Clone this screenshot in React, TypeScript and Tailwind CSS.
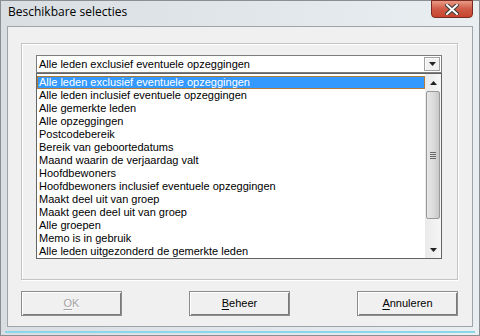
import React from "react";

const items = [
  "Alle leden exclusief eventuele opzeggingen",
  "Alle leden inclusief eventuele opzeggingen",
  "Alle gemerkte leden",
  "Alle opzeggingen",
  "Postcodebereik",
  "Bereik van geboortedatums",
  "Maand waarin de verjaardag valt",
  "Hoofdbewoners",
  "Hoofdbewoners inclusief eventuele opzeggingen",
  "Maakt deel uit van groep",
  "Maakt geen deel uit van groep",
  "Alle groepen",
  "Memo is in gebruik",
  "Alle leden uitgezonderd de gemerkte leden",
];

function Arrow({ up }: { up?: boolean }) {
  return (
    <svg width="7" height="4" viewBox="0 0 7 4">
      {up ? <path d="M0 4 L3.5 0 L7 4 Z" fill="#222" /> : <path d="M0 0 L7 0 L3.5 4 Z" fill="#222" />}
    </svg>
  );
}

function Btn({ label, disabled }: { label: string; disabled?: boolean }) {
  return (
    <div className="w-[101px] h-[25px] border border-[#8c8c8c] shadow-[inset_1px_1px_0_#ffffff,inset_-1px_-1px_0_#7a7a7a] bg-[#f0f0f0] flex items-center justify-center">
      <span
        className={
          disabled
            ? "text-[#a3a3a3] [text-shadow:1px_1px_0_#ffffff]"
            : "text-black"
        }
      >
        <span className="underline underline-offset-[2px]">{label[0]}</span>
        {label.slice(1)}
      </span>
    </div>
  );
}

export default function App() {
  return (
    <div
      className="w-[480px] h-[336px] bg-gradient-to-r from-[#d9dee2] to-[#e9eef1] flex flex-col border border-[#8a8f94] text-[11px] leading-[13px]"
      style={{ fontFamily: '"Liberation Sans", Arial, sans-serif' }}
    >
      <div className="h-[25px] flex items-start justify-between relative">
        <div
          className="pl-[7px] pt-[4px] text-[12px] text-black"
          style={{ fontFamily: '"Open Sans", "Noto Sans", sans-serif' }}
        >
          Beschikbare selecties
        </div>
        <div className="mr-[6px] -mt-[1px] w-[42px] h-[18px] rounded-b-[4px] border border-[#7a2a20] bg-gradient-to-b from-[#e89a86] via-[#cf5a45] to-[#c7442f] flex items-center justify-center">
          <svg width="14" height="11" viewBox="0 0 14 11">
            <path d="M2 1 L12 10 M12 1 L2 10" stroke="#3a3a3a" strokeWidth="4" strokeLinecap="square" />
            <path d="M2 1 L12 10 M12 1 L2 10" stroke="#ffffff" strokeWidth="2" strokeLinecap="square" />
          </svg>
        </div>
      </div>
      <div className="flex pl-[6px]">
        <div className="w-[466px] h-[301px] bg-[#f0f0f0] border border-[#a0a4a8] pl-[13px] pt-[16px] flex flex-col">
          <div className="w-[437px] h-[237px] border border-[#c4c4c4] shadow-[1px_1px_0_#ffffff,inset_1px_1px_0_#ffffff] pl-[14px] pt-[11px]">
            <div className="w-[406px] h-[18px] border border-[#7d7d7d] bg-white flex items-center justify-between pl-[2px] pr-[1px]">
              <span>Alle leden exclusief eventuele opzeggingen</span>
              <div className="w-[16px] h-[14px] bg-[#f0f0f0] border border-[#a0a0a0] shadow-[inset_1px_1px_0_#ffffff] flex items-center justify-center">
                <Arrow />
              </div>
            </div>
            <div className="w-[406px] h-[186px] border border-[#646464] bg-white flex">
              <div className="flex-1 pt-[2px] pl-[0px]">
                {items.map((t, i) => (
                  <div
                    key={t}
                    className={
                      i === 0
                        ? "h-[13px] bg-[#3399ff] text-white border border-[#b07a3c] pl-[1px] leading-[11px] whitespace-nowrap"
                        : "h-[13px] pl-[2px] whitespace-nowrap text-black"
                    }
                  >
                    {t}
                  </div>
                ))}
              </div>
              <div className="w-[16px] bg-gradient-to-r from-[#eaeaea] to-[#f6f6f6] flex flex-col">
                <div className="h-[17px] flex items-center justify-center">
                  <Arrow up />
                </div>
                <div className="mx-[1px] h-[128px] rounded-[2px] border border-[#9a9a9a] bg-gradient-to-r from-[#e6e6e6] via-[#dcdcdc] to-[#c8c8c8] flex items-center justify-center">
                  <svg width="6" height="7" viewBox="0 0 6 7">
                    <path d="M0 0.5 H6 M0 2.5 H6 M0 4.5 H6 M0 6.5 H6" stroke="#6a6a6a" strokeWidth="1" />
                  </svg>
                </div>
                <div className="flex-1" />
                <div className="h-[17px] flex items-center justify-center">
                  <Arrow />
                </div>
              </div>
            </div>
          </div>
          <div className="w-[437px] mt-[11px] flex justify-between">
            <Btn label="OK" disabled />
            <Btn label="Beheer" />
            <Btn label="Annuleren" />
          </div>
        </div>
      </div>
      <div className="flex-1 flex flex-col justify-end">
        <div className="h-[2px] bg-[#8ad6ea] mx-[4px]" />
        <div className="h-[2px]" />
      </div>
    </div>
  );
}
